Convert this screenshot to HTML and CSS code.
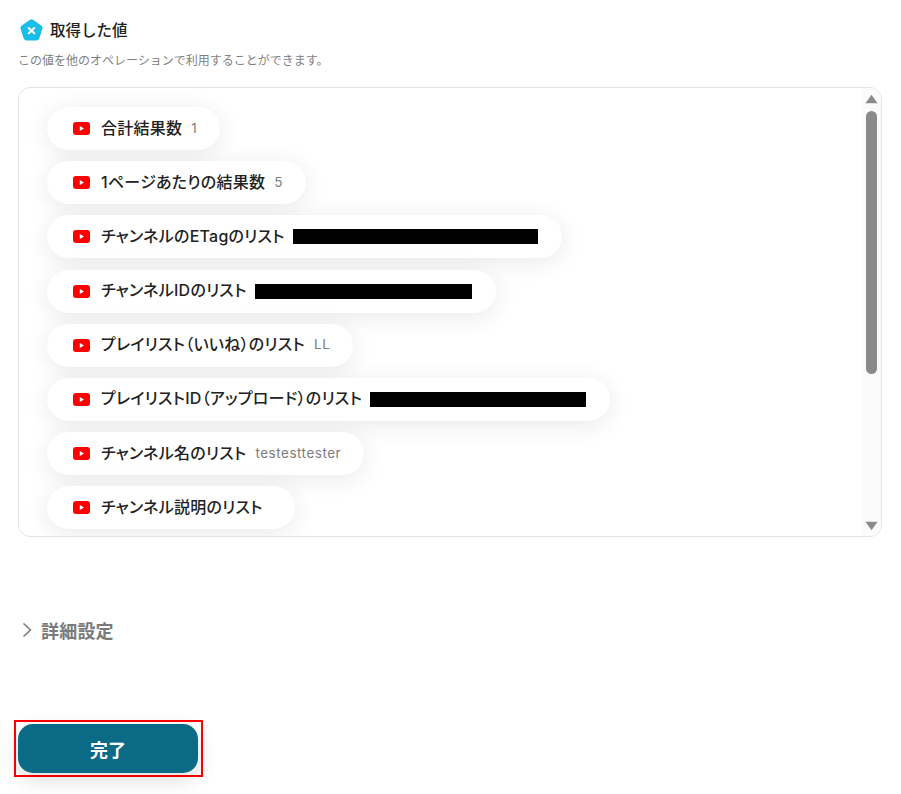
FILE: index.html
```html
<!DOCTYPE html>
<html lang="ja">
<head>
<meta charset="utf-8">
<title>取得した値</title>
<link rel="stylesheet" href="styles.css">
</head>
<body>
<main class="page">
  <header class="heading">
    <svg class="logo" viewBox="0 0 23 22"><path d="M9.700 .9a3 3 0 0 1 3.600 0l7.900 5.700a3 3 0 0 1 1.100 3.400l-2.900 9.300a3 3 0 0 1-2.900 2.100H6.500a3 3 0 0 1-2.900-2.100L.7 10a3 3 0 0 1 1.100-3.400z" fill="#18bdea"/><path d="M8.700 9l5.600 5.200M14.300 9l-5.600 5.200" stroke="#fff" stroke-width="2" stroke-linecap="round"/></svg>
    <h1 class="title">取得した値</h1>
  </header>
  <p class="desc">この値を他のオペレーションで利用することができます。</p>
  <section class="box">
    <ul class="list">
      <li class="pill"><svg class="yt" viewBox="0 0 17 13"><rect width="17" height="13" rx="3" fill="#f00"/><path d="M6.800 4.100v4.800L11 6.500z" fill="#fff"/></svg><span class="name">合計結果数</span><span class="val">1</span></li>
      <li class="pill"><svg class="yt" viewBox="0 0 17 13"><rect width="17" height="13" rx="3" fill="#f00"/><path d="M6.800 4.100v4.800L11 6.500z" fill="#fff"/></svg><span class="name">1ページあたりの結果数</span><span class="val">5</span></li>
      <li class="pill"><svg class="yt" viewBox="0 0 17 13"><rect width="17" height="13" rx="3" fill="#f00"/><path d="M6.800 4.100v4.800L11 6.500z" fill="#fff"/></svg><span class="name">チャンネルのETagのリスト</span><span class="redact r1"></span></li>
      <li class="pill"><svg class="yt" viewBox="0 0 17 13"><rect width="17" height="13" rx="3" fill="#f00"/><path d="M6.800 4.100v4.800L11 6.500z" fill="#fff"/></svg><span class="name">チャンネルIDのリスト</span><span class="redact r2"></span></li>
      <li class="pill"><svg class="yt" viewBox="0 0 17 13"><rect width="17" height="13" rx="3" fill="#f00"/><path d="M6.800 4.100v4.800L11 6.500z" fill="#fff"/></svg><span class="name">プレイリスト（いいね）のリスト</span><span class="val">LL</span></li>
      <li class="pill"><svg class="yt" viewBox="0 0 17 13"><rect width="17" height="13" rx="3" fill="#f00"/><path d="M6.800 4.100v4.800L11 6.500z" fill="#fff"/></svg><span class="name">プレイリストID（アップロード）のリスト</span><span class="redact r3"></span></li>
      <li class="pill"><svg class="yt" viewBox="0 0 17 13"><rect width="17" height="13" rx="3" fill="#f00"/><path d="M6.800 4.100v4.800L11 6.500z" fill="#fff"/></svg><span class="name">チャンネル名のリスト</span><span class="val">testesttester</span></li>
      <li class="pill"><svg class="yt" viewBox="0 0 17 13"><rect width="17" height="13" rx="3" fill="#f00"/><path d="M6.800 4.100v4.800L11 6.500z" fill="#fff"/></svg><span class="name">チャンネル説明のリスト</span><span class="val"></span></li>
    </ul>
    <div class="scrollbar">
      <svg class="arrow" viewBox="0 0 14 10"><path d="M7 .5l6.500 9H.5z" fill="#8a8a8a"/></svg>
      <div class="thumb"></div>
      <svg class="arrow arrow-down" viewBox="0 0 14 10"><path d="M7 9.500L.5 .5h13z" fill="#8a8a8a"/></svg>
    </div>
  </section>
  <div class="details">
    <svg class="chev" viewBox="0 0 10 16" width="10" height="16"><path d="M1.500 1.500L8.500 8l-7 6.500" fill="none" stroke="#777" stroke-width="1.500"/></svg>
    <span>詳細設定</span>
  </div>
  <div class="action">
    <button class="done" type="button">完了</button>
  </div>
</main>
</body>
</html>
```
FILE: styles.css
```css
* { box-sizing: border-box; }
html, body { margin: 0; padding: 0; background: #fff; }
body {
  width: 901px;
  height: 794px;
  overflow: hidden;
  font-family: Inter, "Noto Sans CJK JP", sans-serif;
  color: #222;
}
.page { padding: 18px 19px 0 18px; }
.heading { display: flex; align-items: center; gap: 7px; height: 24px; padding-left: 2px; }
.logo { width: 23px; height: 22px; flex: none; }
.title { margin: 0; padding-top: 2px; font-size: 15.5px; font-weight: 500; line-height: 24px; color: #222; }
.desc { margin: 10px 0 0; font-size: 12px; line-height: 18px; color: #7f7f7f; }
.box {
  display: flex;
  height: 450px;
  margin-top: 17px;
  border: 1px solid #e4e4e4;
  border-radius: 12px;
  overflow: hidden;
}
.list {
  flex: 1;
  margin: 0;
  padding: 19px 0 0 28px;
  list-style: none;
  display: flex;
  flex-direction: column;
  align-items: flex-start;
  gap: 11.2px;
  overflow: hidden;
}
.pill {
  display: flex;
  align-items: center;
  flex: none;
  height: 43px;
  padding: 0 23px 0 26px;
  border-radius: 22px;
  background: #fff;
  box-shadow: 0 4px 24px rgba(0, 0, 0, .09);
  white-space: nowrap;
}
.yt { width: 17px; height: 13px; flex: none; margin-right: 11px; }
.name { padding-bottom: 2px; font-size: 16px; line-height: 24px; font-weight: 500; color: #222; font-feature-settings: "palt"; letter-spacing: .25px; }
.val { margin-left: 9px; padding-bottom: 2px; font-size: 13.5px; line-height: 24px; color: #7d7d7d; letter-spacing: .5px; }
.redact { display: block; height: 15px; margin: 0 1px 0 8px; background: #000; }
.r1 { width: 245px; }
.r2 { width: 217px; }
.r3 { width: 216px; }
.scrollbar {
  flex: none;
  width: 19px;
  height: 100%;
  background: #fbfbfb;
  display: flex;
  flex-direction: column;
  align-items: center;
  padding-top: 6px;
}
.arrow { width: 13px; height: 10px; flex: none; }
.thumb { width: 11px; height: 263px; margin-top: 7px; border-radius: 6px; background: #8a8a8a; }
.arrow-down { margin-top: auto; margin-bottom: 5px; }
.details {
  display: flex;
  align-items: center;
  gap: 9px;
  margin-top: 81px;
  padding-left: 4px;
  height: 24px;
  font-size: 18px;
  font-weight: 700;
  letter-spacing: .2px;
  color: #7a7a7a;
}
.chev { flex: none; }
.action {
  width: 189px;
  height: 57px;
  margin: 78px 0 0 -4px;
  padding: 2px;
  border: 2px solid #f00;
}
.done {
  display: block;
  width: 180px;
  height: 49px;
  border: 0;
  border-radius: 15px;
  background: #0b6a85;
  color: #fff;
  font: 700 18px "Noto Sans CJK JP", sans-serif;
  box-shadow: 0 6px 20px rgba(0, 0, 0, .14);
}
```
